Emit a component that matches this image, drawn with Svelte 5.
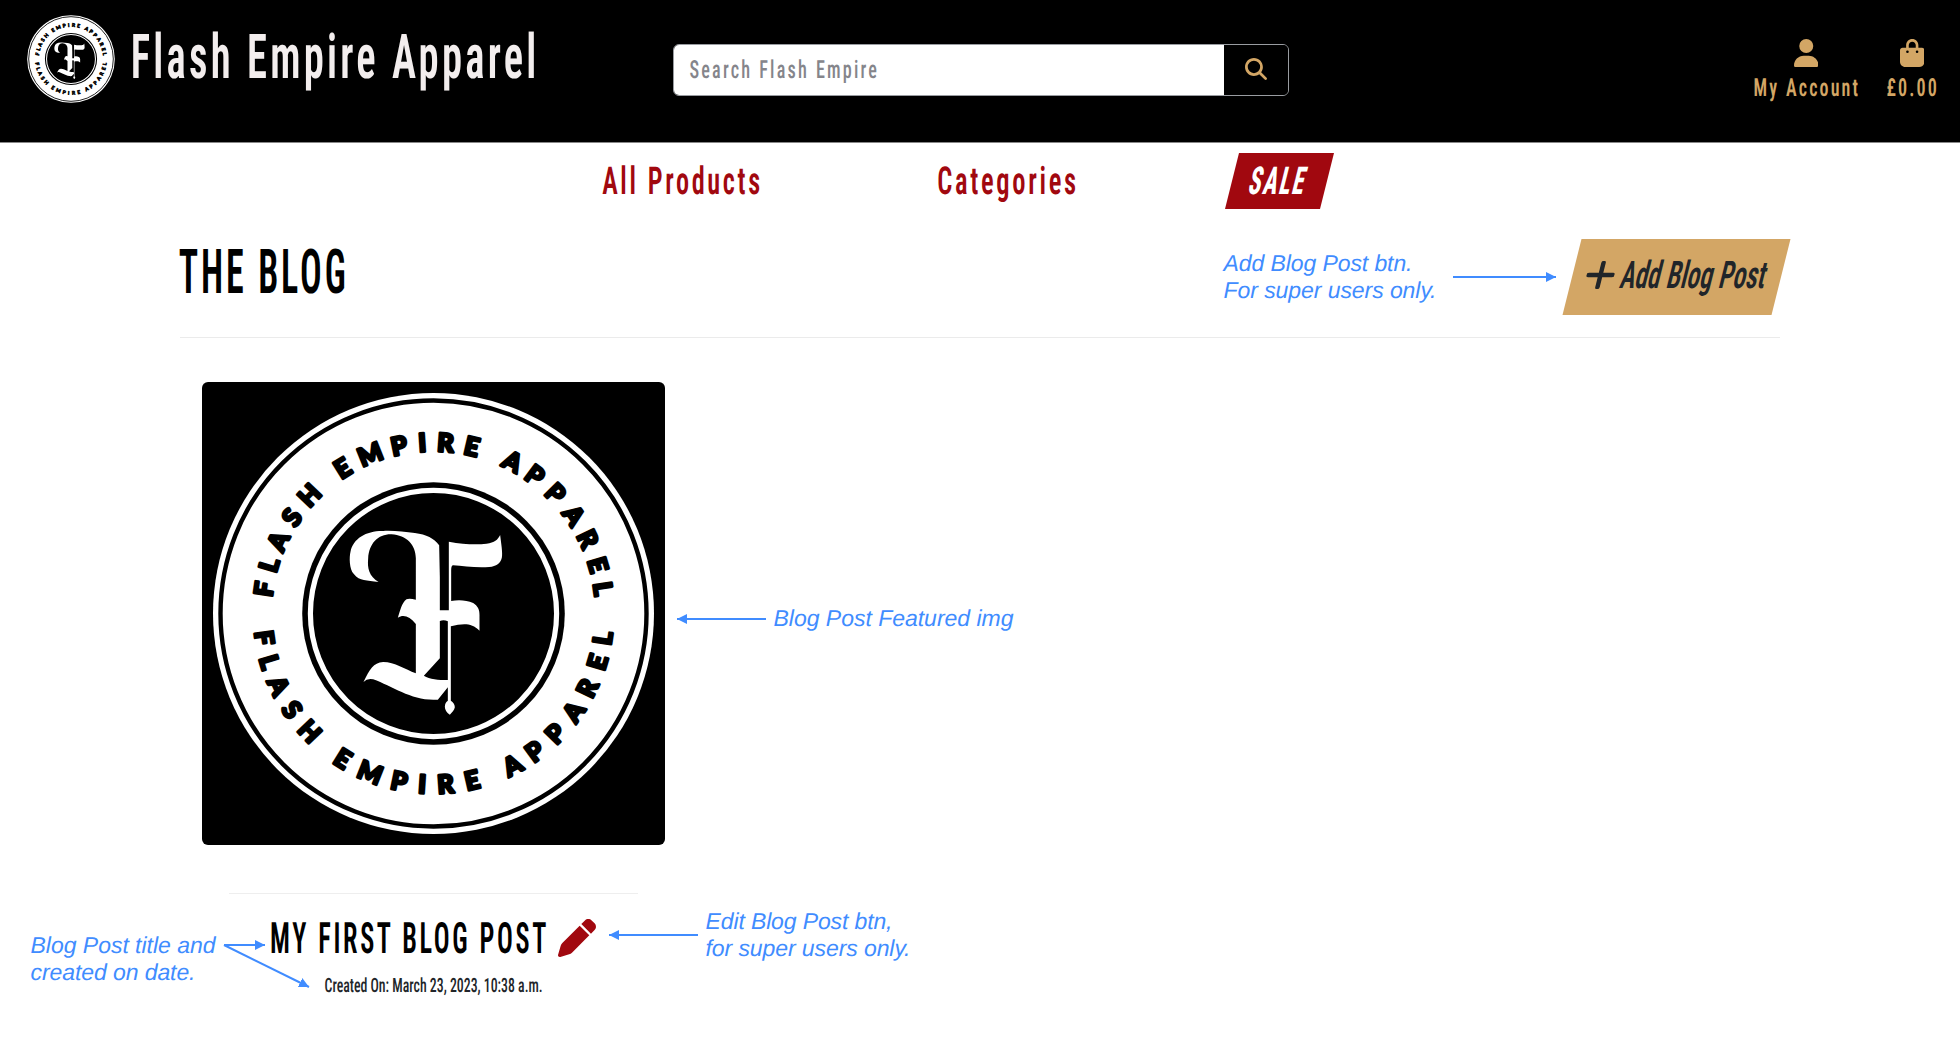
<script>
  const ring = [
    ['F', -81.8], ['L', -73.5], ['A', -65], ['S', -55.8], ['H', -46.4],
    ['E', -32], ['M', -21.7], ['P', -11.6], ['I', -3.8], ['R', 4.1], ['E', 13],
    ['A', 27.5], ['P', 36.3], ['P', 45.4], ['A', 55], ['R', 64.2], ['E', 73.5], ['L', 81.7]
  ];
  const notes = [
    { x: 1223.5, y: 270.5, w: 189, text: 'Add Blog Post btn.' },
    { x: 1223.5, y: 297.5, w: 213, text: 'For super users only.' },
    { x: 773.5, y: 626, w: 240, text: 'Blog Post Featured img' },
    { x: 705.5, y: 929, w: 187, text: 'Edit Blog Post btn,' },
    { x: 705.5, y: 956, w: 205, text: 'for super users only.' },
    { x: 30.5, y: 952.5, w: 185, text: 'Blog Post title and' },
    { x: 30.5, y: 979.5, w: 165, text: 'created on date.' }
  ];
  const arrows = [
    [1453, 277, 1556, 277],
    [766, 619, 677, 619],
    [698, 935, 609, 935],
    [224, 945, 265, 945],
    [224, 945, 309, 987]
  ];
</script>

{#snippet label(text, width, cap, track = 0.08)}
  <svg class="label" {width} height={cap}>
    <text x={-cap * 0.03} y={cap} font-size={cap / 0.711} letter-spacing={(track * cap) / 0.711} textLength={width + cap * (0.04 + track * 0.9)} lengthAdjust="spacingAndGlyphs">{text}</text>
  </svg>
{/snippet}

{#snippet badge(cls)}
  <svg class={cls} viewBox="-231.5 -231.5 463 463">
    <circle r="220.5" fill="#fff" />
    <circle r="213" fill="none" stroke="#000" stroke-width="4.4" />
    <circle r="131.3" />
    <circle r="123.1" fill="none" stroke="#fff" stroke-width="5.2" />
    <g class="ring">
      {#each ring as [ch, a]}
        <text y="-162.2" transform="rotate({a})">{ch}</text>
        <text y="180.2" transform="rotate({-a})">{ch}</text>
      {/each}
    </g>
    <path
      transform="scale(.3333) translate(-311 -310.5)"
      fill="#fff"
      fill-rule="evenodd"
      d="M146 216C110 210 90 215 72 192C58 178 58 140 62 125C70 85 110 62 160 63C190 61 225 66 255 69C290 74 312 84 328 106L330 200V301H357V95C400 103 440 104 470 101C495 98 503 90 511 75C514 100 519 130 516 143C512 160 500 168 478 171C440 174 400 168 370 166Q364 166 364 180V273C385 269 410 270 430 279C445 290 449 298 449 315V362C425 338 400 340 363 349V572C370 576 375 583 375 592C374 600 366 608 360 614C350 608 345 598 345 590C345 582 349 575 354 572V532L324 569C250 575 190 530 130 508Q112 504 101 516C120 478 130 458 160 456C195 456 225 478 258 490V342C240 318 220 312 204 323C212 300 215 280 230 268Q238 264 258 269V145C258 105 230 76 185 73C145 72 118 100 115 145C112 175 118 200 146 216ZM330 333Q342 328 354 334V510C325 510 300 508 282 497L330 445Z"
    />
  </svg>
{/snippet}

<div class="page">
  <header>
    <a class="brand" href="#home">
      {@render badge('logo')}
      {@render label('Flash Empire Apparel', 404, 44)}
    </a>
    <div class="search">
      <div class="field">{@render label('Search Flash Empire', 187, 17.7, 0.12)}</div>
      <button class="go" aria-label="Search">
        <svg width="22" height="22" viewBox="0 0 512 512"><path d="M416 208c0 45.900-14.900 88.300-40 122.700L502.600 457.400c12.500 12.500 12.500 32.800 0 45.300s-32.800 12.500-45.300 0L330.700 376c-34.400 25.200-76.800 40-122.700 40C93.100 416 0 322.900 0 208S93.100 0 208 0S416 93.100 416 208zM208 352a144 144 0 1 0 0-288 144 144 0 1 0 0 288z" /></svg>
      </button>
    </div>
    <div class="links">
      <a href="#account">
        <svg width="24.500" height="28" viewBox="0 0 448 512"><path d="M224 256A128 128 0 1 0 224 0a128 128 0 1 0 0 256zm-45.700 48C79.800 304 0 383.800 0 482.300C0 498.700 13.300 512 29.700 512H418.300c16.400 0 29.700-13.300 29.700-29.700C448 383.800 368.200 304 269.700 304H178.300z" /></svg>
        {@render label('My Account', 104, 17.7, 0.12)}
      </a>
      <a href="#bag">
        <svg width="24.500" height="28" viewBox="0 0 448 512"><path d="M160 112c0-35.300 28.700-64 64-64s64 28.700 64 64v48H160V112zm-48 48H48c-26.500 0-48 21.500-48 48V416c0 53 43 96 96 96H352c53 0 96-43 96-96V208c0-26.500-21.500-48-48-48H336V112C336 50.100 285.900 0 224 0S112 50.100 112 112v48zm24 48a24 24 0 1 1 0 48 24 24 0 1 1 0-48zm152 24a24 24 0 1 1 48 0 24 24 0 1 1 -48 0z" /></svg>
        {@render label('£0.00', 50, 17.7, 0.12)}
      </a>
    </div>
  </header>

  <nav>
    <a href="#products">{@render label('All Products', 157, 27.3, 0.1)}</a>
    <a href="#categories">{@render label('Categories', 138, 27.3, 0.1)}</a>
    <a class="sale" href="#sale">{@render label('SALE', 54, 27.3, 0.08)}</a>
  </nav>

  <main>
    <div class="heading">
      <h1>{@render label('THE BLOG', 165, 44)}</h1>
      <a class="add" href="#add">
        <svg class="plus" width="28" height="28" viewBox="0 0 28 28"><path d="M14 2V26M2 14H26" /></svg>
        {@render label('Add Blog Post', 144, 27, 0)}
      </a>
    </div>

    <article>
      {@render badge('featured')}
      <div class="info">
        <div class="title">
          <h2>{@render label('MY FIRST BLOG POST', 275, 30.7, 0.1)}</h2>
          <svg width="38" height="38" viewBox="0 0 512 512"><path d="M362.700 19.300L314.300 67.700 444.300 197.700l48.400-48.400c25-25 25-65.500 0-90.500L453.300 19.300c-25-25-65.500-25-90.500 0zm-71 71L58.600 323.500c-10.400 10.400-18 23.300-22.200 37.400L1 481.200C-1.500 489.700 .8 498.800 7 505s15.300 8.500 23.700 6.100l120.300-35.400c14.100-4.200 27-11.800 37.400-22.200L421.700 220.300 291.700 90.300z" /></svg>
        </div>
        <div class="date">{@render label('Created On: March 23, 2023, 10:38 a.m.', 217.5, 14, 0)}</div>
      </div>
    </article>
  </main>

  <svg class="notes" width="1960" height="1046">
    <defs>
      <marker id="tip" viewBox="0 0 10 10" refX="10" refY="5" markerWidth="10" markerHeight="10" markerUnits="userSpaceOnUse" orient="auto">
        <path d="M0 0L10 5L0 10Z" />
      </marker>
    </defs>
    {#each arrows as [x1, y1, x2, y2]}
      <line {x1} {y1} {x2} {y2} marker-end="url(#tip)" />
    {/each}
    {#each notes as n}
      <text x={n.x} y={n.y} textLength={n.w}>{n.text}</text>
    {/each}
  </svg>
</div>

<style>
  :global(body) { background: #fff; }
  .page {
    position: relative;
    width: 1960px;
    height: 1046px;
    overflow: hidden;
    font-family: Roboto, sans-serif;
    color: #212529;
  }
  a { color: inherit; text-decoration: none; }
  svg { display: block; flex: none; fill: currentColor; }
  .label { overflow: visible; font-weight: 600; font-stretch: 75%; word-spacing: 0.05em; text-rendering: geometricPrecision; }

  header {
    box-sizing: border-box;
    height: 143px;
    display: flex;
    align-items: flex-start;
    background: #000;
    border-bottom: 1px solid #888;
  }
  .brand { box-sizing: border-box; display: flex; width: 672.500px; padding: 13px 0 0 24.500px; color: #f3eeee; }
  .logo { width: 92px; height: 92px; fill: #000; }
  .brand .label { margin: 21px 0 0 15.500px; }
  .search {
    box-sizing: border-box;
    display: flex;
    width: 616px;
    height: 52px;
    margin-top: 44px;
    border: 1px solid #999ca1;
    border-radius: 6px;
    overflow: hidden;
  }
  .field { flex: 1; padding: 15px 0 0 16px; background: #fff; color: #85858b; }
  .field .label, .date .label { font-weight: 500; }
  .date .label { word-spacing: 0; }
  .go {
    display: flex;
    align-items: center;
    justify-content: center;
    width: 64px;
    padding: 0 0 2px;
    border: 0;
    background: #000;
    color: #d3a665;
  }
  .links { display: flex; gap: 29px; margin: 39px 23px 0 auto; color: #d3a665; }
  .links a { display: flex; flex-direction: column; align-items: center; gap: 11px; }

  nav { display: flex; height: 96px; color: #a1080f; }
  nav a { padding-top: 24px; }
  nav a:first-child { margin-left: 602.500px; }
  nav a:nth-child(2) { margin-left: 178.500px; }
  nav .sale {
    box-sizing: border-box;
    width: 94.500px;
    height: 56px;
    margin: 10px 0 0 156px;
    padding: 13.500px 0 0 19px;
    background: #a1080f;
    color: #fff;
    transform: skewX(-14deg);
  }
  .sale .label { font-weight: 800; }

  main { width: 1600px; margin: 0 auto; }
  .heading {
    box-sizing: border-box;
    height: 99px;
    display: flex;
    justify-content: space-between;
    align-items: flex-start;
    border-bottom: 1px solid #ebebeb;
  }
  h1, h2 { margin: 0; color: #000; font-size: 16px; }
  h1 { padding-top: 10px; }
  .add {
    box-sizing: border-box;
    display: flex;
    gap: 8px;
    width: 209px;
    height: 76px;
    margin-right: -1px;
    padding: 22px 0 0 14px;
    background: #d3a665;
    transform: skewX(-14deg);
  }
  .plus { fill: none; stroke: currentColor; stroke-width: 4.500; stroke-linecap: round; }

  article { width: 463px; margin: 44px 0 0 22px; }
  .featured { width: 463px; height: 463px; background: #000; border-radius: 6px; fill: #000; }
  .ring text {
    font: 900 25.500px Lato, sans-serif;
    text-anchor: middle;
    fill: #000;
    stroke: #000;
    stroke-width: 2.800;
    stroke-linejoin: round;
  }
  .info { width: 409px; margin: 48px auto 0; border-top: 1.500px solid #eee; }
  .title { display: flex; gap: 12px; padding: 25px 0 0 41.500px; }
  h2 { padding-top: 2.500px; }
  .title > svg { color: #a1080f; }
  .date { padding: 20.500px 0 0 96px; }

  .notes { position: absolute; inset: 0; fill: #408cff; pointer-events: none; }
  .notes text { font: italic 23px "Liberation Sans", Arial, sans-serif; text-rendering: geometricPrecision; }
  .notes line { stroke: #408cff; stroke-width: 2; }
</style>
